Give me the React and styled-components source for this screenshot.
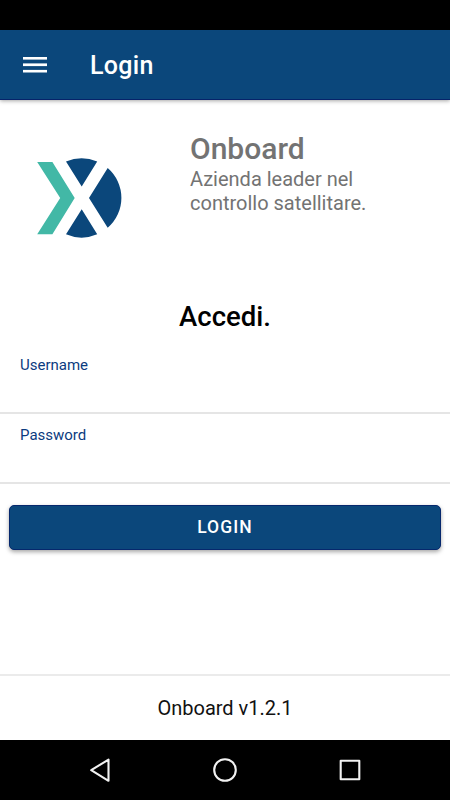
import React, { useState } from "react";
import styled, { createGlobalStyle } from "styled-components";

function App() {
  const [username, setUsername] = useState("");
  const [password, setPassword] = useState("");

  return (
    <Screen>
      <GlobalStyle />
      <StatusBar />
      <Header>
        <MenuButton type="button" aria-label="Menu">
          <svg width="24" height="16" viewBox="0 0 24 16" fill="#fff">
            <rect width="24" height="2.6" />
            <rect y="6.4" width="24" height="2.7" />
            <rect y="12.9" width="24" height="2.6" />
          </svg>
        </MenuButton>
        <HeaderTitle>Login</HeaderTitle>
      </Header>
      <Content>
        <Brand>
          <Logo />
          <BrandText>
            <BrandName>Onboard</BrandName>
            <Tagline>
              Azienda leader nel
              <br />
              controllo satellitare.
            </Tagline>
          </BrandText>
        </Brand>
        <FormTitle>Accedi.</FormTitle>
        <form onSubmit={(event) => event.preventDefault()}>
          <Field>
            <Label>Username</Label>
            <Input
              value={username}
              onChange={(event) => setUsername(event.target.value)}
            />
          </Field>
          <Field>
            <Label>Password</Label>
            <Input
              type="password"
              value={password}
              onChange={(event) => setPassword(event.target.value)}
            />
          </Field>
          <LoginButton type="submit">LOGIN</LoginButton>
        </form>
      </Content>
      <Footer>Onboard v1.2.1</Footer>
      <NavBar>
        <svg width="24" height="26" viewBox="0 0 24 26">
          <path d="M20.5 2.6v21.2L3.2 13.2z" />
        </svg>
        <svg width="24" height="26" viewBox="0 0 24 26">
          <circle cx="12" cy="13" r="10.8" />
        </svg>
        <svg width="24" height="26" viewBox="0 0 24 26">
          <rect x="2.7" y="3.7" width="18.6" height="18.6" />
        </svg>
      </NavBar>
    </Screen>
  );
}

function Logo() {
  return (
    <LogoSvg width="90" height="84" viewBox="34 156 90 84">
      <path
        fill="#42b8a6"
        d="M37.2 162h15.2l22.3 36-22.3 36.2H37.2L60.2 198z"
      />
      <path
        fill="#0b477b"
        d="M66 161.6a39.5 39.5 0 0 1 31.2 0L81.7 186.6zM66 234.3a39.5 39.5 0 0 0 31.2 0L81.7 209.3zM107.7 168a39.5 39.5 0 0 1 0 59.8L89 198z"
      />
    </LogoSvg>
  );
}

export default App;

const GlobalStyle = createGlobalStyle`
  * {
    box-sizing: border-box;
  }

  body {
    margin: 0;
    font-family: Roboto, sans-serif;
  }
`;

const Screen = styled.div`
  display: flex;
  flex-direction: column;
  width: 100%;
  height: 100vh;
  overflow: hidden;
  background: #fff;
`;

const StatusBar = styled.div`
  flex: none;
  height: 30px;
  background: #000;
`;

const Header = styled.header`
  display: flex;
  flex: none;
  align-items: center;
  height: 70px;
  padding: 1px 23px 0;
  background: #0b477b;
  border-bottom: 1px solid #06236a;
  box-shadow: 0 1px 4px rgba(0, 0, 0, 0.35);
`;

const MenuButton = styled.button`
  display: flex;
  padding: 0;
  border: 0;
  background: none;
`;

const HeaderTitle = styled.h1`
  margin: 0 0 0 43px;
  padding-top: 1px;
  color: #fff;
  font-size: 25px;
  font-weight: 500;
  line-height: 30px;
  letter-spacing: 0.3px;
`;

const Content = styled.main`
  flex: 1;
`;

const Brand = styled.section`
  display: flex;
  height: 190px;
`;

const LogoSvg = styled.svg`
  flex: none;
  margin: 56px 66px 0 34px;
`;

const BrandText = styled.div`
  padding-top: 31px;
  color: #737373;
`;

const BrandName = styled.h2`
  margin: 0;
  font-size: 30px;
  font-weight: 500;
  line-height: 36px;
`;

const Tagline = styled.p`
  margin: 0;
  font-size: 20px;
  line-height: 24px;
`;

const FormTitle = styled.h2`
  margin: 0;
  padding-top: 9px;
  height: 54px;
  color: #000;
  font-size: 27.5px;
  font-weight: 500;
  line-height: 36px;
  text-align: center;
`;

const Field = styled.label`
  display: block;
  height: 70px;
  padding: 11px 20px 0;
  border-bottom: 2px solid #e5e5e5;
`;

const Label = styled.span`
  display: block;
  color: #0b3b80;
  font-size: 15px;
  line-height: 20px;
`;

const Input = styled.input`
  display: block;
  width: 100%;
  height: 34px;
  padding: 0;
  border: 0;
  outline: 0;
  background: none;
  font: 20px Roboto, sans-serif;
`;

const LoginButton = styled.button`
  display: block;
  width: calc(100% - 18px);
  height: 45px;
  margin: 21px 9px 0;
  padding: 0 0 1px;
  border: 1px solid #06286d;
  border-radius: 5px;
  background: #0b477b;
  box-shadow: 0 2px 4px rgba(0, 0, 0, 0.35);
  color: #fff;
  font: 500 17.5px Roboto, sans-serif;
  letter-spacing: 1.1px;
`;

const Footer = styled.footer`
  flex: none;
  height: 66px;
  border-top: 2px solid #ebebeb;
  color: #111;
  font-size: 20px;
  line-height: 64px;
  text-align: center;
`;

const NavBar = styled.nav`
  display: flex;
  flex: none;
  align-items: center;
  justify-content: space-between;
  height: 60px;
  padding: 0 88px;
  background: #000;

  svg {
    fill: none;
    stroke: #f2f2f2;
    stroke-width: 2.1;
    stroke-linejoin: round;
  }
`;
